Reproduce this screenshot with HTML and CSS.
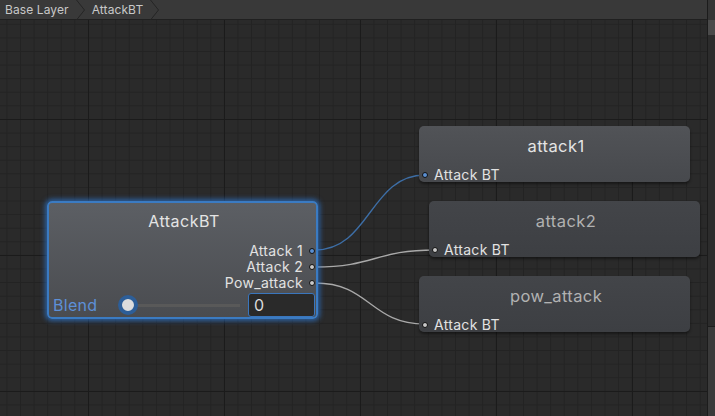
FILE: index.html
```html
<!DOCTYPE html>
<html>
<head>
<meta charset="utf-8">
<link rel="stylesheet" href="styles.css">
</head>
<body>
<div class="app">
  <div class="main">
    <div class="toolbar">
      <span class="crumb">Base Layer</span>
      <svg class="sep" width="10" height="20" viewBox="0 0 10 20"><path d="M0.5 0 L8.5 10 L0.5 20" fill="none" stroke="#252525" stroke-width="1"/></svg>
      <span class="crumb">AttackBT</span>
      <svg class="sep" width="10" height="20" viewBox="0 0 10 20"><path d="M0.5 0 L8.5 10 L0.5 20" fill="none" stroke="#252525" stroke-width="1"/></svg>
    </div>
    <div class="canvas">
      <svg class="edges" width="707" height="396" viewBox="0 20 707 396">
        <path d="M315 250 C 370 250, 370 175, 425 175" class="edge edge-active"/>
        <path d="M315 267 C 375 267, 375 250, 435 250" class="edge"/>
        <path d="M315 283 C 370 283, 370 324, 425 324" class="edge"/>
      </svg>

      <div class="node node-main" style="left:47px; top:181px;">
        <div class="node-title">AttackBT</div>
        <div class="outputs">
          <div class="port port-out"><span>Attack 1</span><i class="dot dot-on"></i></div>
          <div class="port port-out"><span>Attack 2</span><i class="dot"></i></div>
          <div class="port port-out"><span>Pow_attack</span><i class="dot"></i></div>
        </div>
        <div class="blend">
          <span class="blend-label">Blend</span>
          <div class="slider"><span class="handle"></span></div>
          <div class="field">0</div>
        </div>
      </div>

      <div class="node node-child node-hover" style="left:419px; top:106px;">
        <div class="node-title">attack1</div>
        <div class="port port-in"><i class="dot dot-on"></i><span>Attack BT</span></div>
      </div>

      <div class="node node-child" style="left:429px; top:181px;">
        <div class="node-title dim">attack2</div>
        <div class="port port-in"><i class="dot"></i><span>Attack BT</span></div>
      </div>

      <div class="node node-child" style="left:419px; top:256px;">
        <div class="node-title dim">pow_attack</div>
        <div class="port port-in"><i class="dot"></i><span>Attack BT</span></div>
      </div>
    </div>
  </div>
  <div class="vscroll">
    <div class="vs-corner"></div>
    <div class="vs-track"><div class="vs-thumb"></div></div>
    <div class="vs-bottom"></div>
  </div>
</div>
</body>
</html>
```

FILE: styles.css
```css
* { box-sizing: border-box; }
html, body {
  margin: 0;
  padding: 0;
  width: 715px;
  height: 416px;
  overflow: hidden;
  background: #282828;
  font-family: Inter, "Noto Sans", "Liberation Sans", sans-serif;
}
.app {
  display: flex;
  width: 715px;
  height: 416px;
}
.main {
  flex: 1;
  display: flex;
  flex-direction: column;
  min-width: 0;
}
.toolbar {
  height: 20px;
  background: #393939;
  border-bottom: 1px solid #202020;
  display: flex;
  align-items: center;
  padding-left: 5px;
  color: #c8c8c8;
  font-size: 12px;
  letter-spacing: 0.1px;
}
.crumb { line-height: 19px; }
.sep { margin: 0 6px 0 7px; align-self: flex-start; }

.canvas {
  position: relative;
  flex: 1;
  overflow: hidden;
  background-color: #2a2a2a;
  background-image:
    linear-gradient(to right, #1b1b1b 1px, transparent 1px),
    linear-gradient(to bottom, #1b1b1b 1px, transparent 1px),
    linear-gradient(to right, #232323 1px, transparent 1px),
    linear-gradient(to bottom, #232323 1px, transparent 1px);
  background-size: 136px 100%, 100% 136px, 13.6px 100%, 100% 13.6px;
  background-position: 88px 0, 0 99px, 6.4px 0, 0 3.8px;
}
.edges { position: absolute; left: 0; top: 0; }
.edge { fill: none; stroke: #a9a9a9; stroke-width: 1.3; }
.edge-active { stroke: #3d6ea6; }

.node {
  position: absolute;
  width: 271px;
  border-radius: 5px;
  display: flex;
  flex-direction: column;
  color: #e0e0e0;
}
.node-main {
  height: 118px;
  border: 2px solid #3b7bc2;
  background: linear-gradient(#5c5f64, #4a4c50);
  box-shadow: 0 0 5px 2px rgba(45, 120, 210, 0.7);
  padding: 8px 1px 0 4px;
}
.node-child {
  height: 56px;
  background: linear-gradient(#434549, #3d3f43);
  box-shadow: 0 2px 3px rgba(0, 0, 0, 0.45);
  padding: 10px 0 0 3px;
}
.node-hover { background: linear-gradient(#515357, #47494d); }
.node-title {
  text-align: center;
  font-size: 16.5px;
  letter-spacing: 0.4px;
  line-height: 20px;
  color: #e4e4e4;
}
.node-main .node-title { font-size: 16px; letter-spacing: 0.5px; }
.node-title.dim { color: #b2b2b2; }

.outputs {
  margin-top: auto;
  display: flex;
  flex-direction: column;
}
.port {
  display: flex;
  align-items: center;
  font-size: 14px;
  letter-spacing: 0.3px;
  line-height: 16px;
  color: #e2e2e2;
}
.port-out { justify-content: flex-end; }
.port-out .dot { margin-left: 6px; }
.port-in { margin-top: auto; line-height: 14px; }
.port-in .dot { margin-right: 6px; }
.dot {
  display: block;
  flex: none;
  width: 6px;
  height: 6px;
  border-radius: 50%;
  border: 1.5px solid #111;
  background: #c8c8c8;
}
.dot-on { background: #5b8fd1; }

.blend {
  display: flex;
  align-items: center;
  height: 24px;
  margin-top: 2px;
}
.blend-label {
  width: 65px;
  font-size: 16px;
  letter-spacing: 0.3px;
  color: #5d90d8;
}
.slider {
  width: 122px;
  height: 20px;
  display: flex;
  align-items: center;
  background: linear-gradient(#595959, #595959) 10px 50% / 112px 3px no-repeat;
}
.handle {
  width: 20px;
  height: 20px;
  border-radius: 50%;
  background: #dcdcdc;
  border: 4px solid #2d5e98;
}
.field {
  margin-left: 8px;
  width: 67px;
  height: 24px;
  border: 1px solid #3a76bd;
  border-radius: 3px;
  background: #2a2a2a;
  color: #dcdcdc;
  font-size: 16px;
  line-height: 22px;
  padding-left: 5px;
}

.vscroll {
  width: 8px;
  display: flex;
  flex-direction: column;
  border-left: 1px solid #1c1c1c;
  background: #2c2c2c;
}
.vs-corner { height: 20px; background: #353535; }
.vs-track { flex: 1; position: relative; }
.vs-thumb { height: 15px; background: #4a4a4a; }
.vs-bottom { height: 90px; background: #3a3a3a; border-top: 1px solid #1c1c1c; }
```
